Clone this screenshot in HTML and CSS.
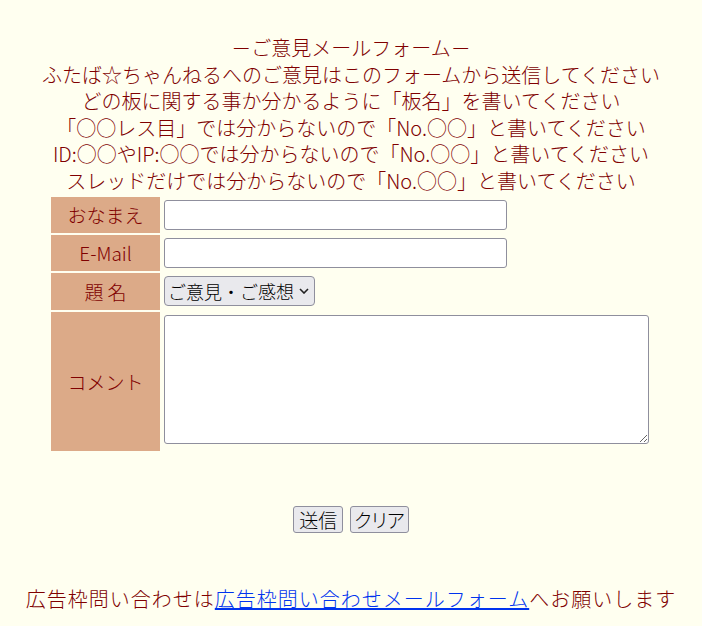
FILE: index.html
```html
<!DOCTYPE html>
<html lang="ja">
<head>
<meta charset="utf-8">
<title>ご意見メールフォーム</title>
<link rel="stylesheet" href="styles.css">
</head>
<body>
<div class="page">
  <div class="intro">
    <p class="line">－ご意見メールフォーム－</p>
    <p class="line">ふたば☆ちゃんねるへのご意見はこのフォームから送信してください</p>
    <p class="line">どの板に関する事か分かるように「板名」を書いてください</p>
    <p class="line">「○○レス目」では分からないので「No.○○」と書いてください</p>
    <p class="line">ID:○○やIP:○○では分からないので「No.○○」と書いてください</p>
    <p class="line">スレッドだけでは分からないので「No.○○」と書いてください</p>
  </div>
  <form class="mailform">
    <table class="form-table">
      <tr class="row-name">
        <th class="label">おなまえ</th>
        <td class="field"><input class="text-input" type="text" name="name"></td>
      </tr>
      <tr class="row-mail">
        <th class="label">E-Mail</th>
        <td class="field"><input class="text-input" type="text" name="email"></td>
      </tr>
      <tr class="row-subject">
        <th class="label">題&nbsp;名</th>
        <td class="field">
          <div class="select-wrap">
            <select class="select" name="subject">
              <option>ご意見・ご感想</option>
            </select>
            <svg class="chev" width="10" height="6" viewBox="0 0 10 6"><path d="M1 1 L5 5 L9 1" fill="none" stroke="#222" stroke-width="1.6"/></svg>
          </div>
        </td>
      </tr>
      <tr class="row-comment">
        <th class="label">コメント</th>
        <td class="field"><textarea class="comment" name="comment"></textarea></td>
      </tr>
    </table>
    <div class="buttons">
      <button class="btn btn-send" type="button">送信</button>
      <button class="btn btn-clear" type="button">クリア</button>
    </div>
  </form>
  <p class="footer">広告枠問い合わせは<a class="link" href="#">広告枠問い合わせメールフォーム</a>へお願いします</p>
</div>
</body>
</html>
```
FILE: styles.css
```css
html, body {
  margin: 0;
  padding: 0;
  background: #fffff0;
}
body {
  color: #800000;
  font-family: "Noto Sans CJK JP", "Noto Sans", sans-serif;
  font-size: 20px;
}
.page {
  width: 702px;
  height: 626px;
  padding-top: 35px;
  box-sizing: border-box;
}
.intro {
  text-align: center;
}
.line {
  margin: 0;
  line-height: 26.6px;
  height: 26.6px;
  font-weight: 300;
}
.form-table {
  margin: 0 auto;
  border-collapse: separate;
  border-spacing: 2px;
  width: 604px;
  table-layout: fixed;
}
.label {
  width: 109px;
  background: #dcaa88;
  font-weight: 300;
  font-size: 19px;
  padding: 0;
  text-align: center;
  vertical-align: middle;
}
.field {
  padding: 3px 3px 3px 2px;
  vertical-align: middle;
}
.row-name .label { height: 36px; }
.row-mail .label { height: 35px; }
.row-subject .label { height: 37px; }
.row-comment .label { height: 139px; }
.row-comment .field { vertical-align: top; }
.text-input {
  display: block;
  box-sizing: border-box;
  width: 343px;
  height: 30px;
  border: 1px solid #8f8f9d;
  border-radius: 3px;
  background: #fff;
  margin: 0;
}
.select-wrap {
  position: relative;
  width: 151px;
  height: 30px;
}
.select {
  display: block;
  box-sizing: border-box;
  width: 151px;
  height: 30px;
  margin: 0;
  padding: 0 20px 0 3px;
  border: 1px solid #8f8f9d;
  border-radius: 4px;
  background: #e9e9ed;
  color: #000;
  font-family: "Noto Sans CJK JP", sans-serif;
  font-size: 18px;
  font-weight: 300;
  appearance: none;
  -webkit-appearance: none;
}
.chev {
  position: absolute;
  right: 6px;
  top: 12px;
  pointer-events: none;
}
.comment {
  display: block;
  box-sizing: border-box;
  width: 485px;
  height: 129px;
  margin: 0;
  border: 1px solid #8f8f9d;
  border-radius: 3px;
  background: #fff;
  resize: both;
}
.buttons {
  display: flex;
  justify-content: center;
  gap: 7px;
  margin-top: 53px;
}
.btn {
  box-sizing: border-box;
  height: 27px;
  margin: 0;
  padding: 0 5px;
  border: 1px solid #8f8f9d;
  border-radius: 3px;
  background: #e9e9ed;
  color: #000;
  font-family: "Noto Sans CJK JP", sans-serif;
  font-size: 19px;
  font-weight: 300;
  line-height: 25px;
  font-feature-settings: "palt";
}
.btn-send {
  padding: 0 5px;
}
.btn-clear {
  padding: 0 3px;
}
.footer {
  margin: 53px 0 0;
  text-align: center;
  line-height: 26px;
  font-weight: 300;
  letter-spacing: 1px;
}
.link {
  color: #0033ee;
  text-decoration: underline;
}
```
